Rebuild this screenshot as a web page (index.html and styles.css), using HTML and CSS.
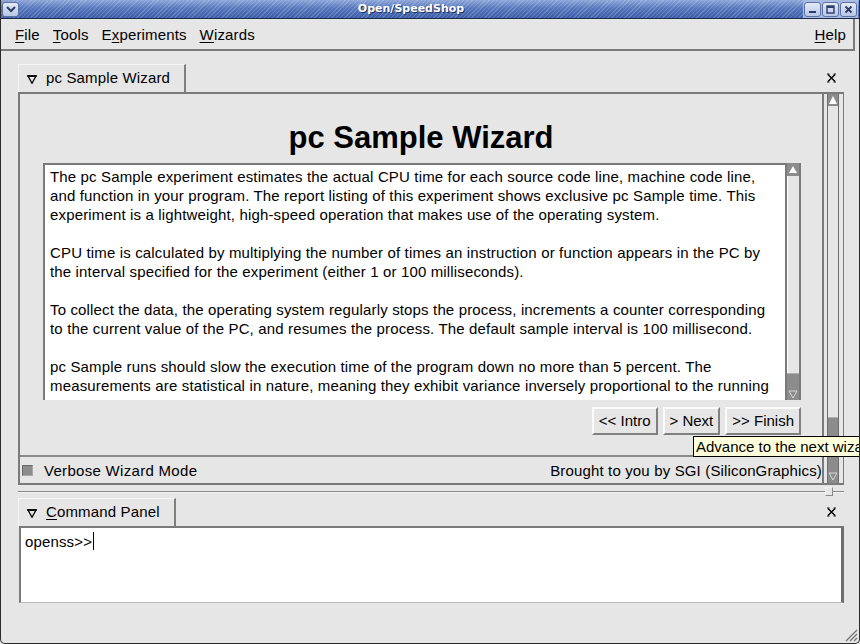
FILE: index.html
```html
<!DOCTYPE html>
<html>
<head>
<meta charset="utf-8">
<title>Open/SpeedShop</title>
<link rel="stylesheet" href="styles.css">
</head>
<body>
<div class="window">
  <div class="titlebar">
    <div class="wbtn wbtn-menu"><svg width="10" height="7" viewBox="0 0 10 7"><polyline points="1,1 5,5 9,1" fill="none" stroke="#2a3d66" stroke-width="2"/></svg></div>
    <div class="tb-title">Open/SpeedShop</div>
    <div class="wgroup">
      <div class="wbtn"><svg width="9" height="9" viewBox="0 0 9 9"><rect x="1" y="6" width="7" height="2" fill="#2a3d66"/></svg></div>
      <div class="wbtn"><svg width="9" height="9" viewBox="0 0 9 9"><rect x="1" y="1" width="7" height="7" fill="none" stroke="#2a3d66" stroke-width="1.4"/><rect x="1" y="1" width="7" height="2" fill="#2a3d66"/></svg></div>
      <div class="wbtn"><svg width="9" height="9" viewBox="0 0 9 9"><path d="M1.5 1.5 L7.5 7.5 M7.5 1.5 L1.5 7.5" stroke="#2a3d66" stroke-width="1.8"/></svg></div>
    </div>
  </div>

  <div class="client">
    <div class="menubar">
      <span class="menu"><u>F</u>ile</span>
      <span class="menu"><u>T</u>ools</span>
      <span class="menu">E<u>x</u>periments</span>
      <span class="menu"><u>W</u>izards</span>
      <span class="menu-spacer"></span>
      <span class="menu"><u>H</u>elp</span>
    </div>

    <div class="dock">
      <div class="tabrow">
        <div class="tab tab-wiz">
          <svg class="tri" width="10" height="9" viewBox="0 0 10 9"><polygon points="1,1 9,1 5,8.3" fill="none" stroke="#000" stroke-width="1.3"/><rect x="0.3" y="0.3" width="9.4" height="1.6" fill="#000"/></svg>
          <span>pc Sample Wizard</span>
        </div>
        <div class="tab-fill"></div>
        <div class="close"><svg width="11" height="10" viewBox="0 0 11 10"><path d="M2 1.5 L9 8.5 M9 1.5 L2 8.5" stroke="#000" stroke-width="1.4"/><path d="M1 1 H3.5 M7.5 1 H10 M1 9 H3.5 M7.5 9 H10" stroke="#000" stroke-width="0.9"/></svg></div>
      </div>
      <div class="frame">
        <div class="viewport">
          <div class="wiz-main">
            <h1 class="wiz-title">pc Sample Wizard</h1>
            <div class="textbox">
              <div class="tb-text">The pc Sample experiment estimates the actual CPU time for each source code line, machine code line,<br>and function in your program. The report listing of this experiment shows exclusive pc Sample time. This<br>experiment is a lightweight, high-speed operation that makes use of the operating system.<br><br>CPU time is calculated by multiplying the number of times an instruction or function appears in the PC by<br>the interval specified for the experiment (either 1 or 100 milliseconds).<br><br>To collect the data, the operating system regularly stops the process, increments a counter corresponding<br>to the current value of the PC, and resumes the process. The default sample interval is 100 millisecond.<br><br>pc Sample runs should slow the execution time of the program down no more than 5 percent. The<br>measurements are statistical in nature, meaning they exhibit variance inversely proportional to the running</div>
              <div class="sb">
                <div class="sb-up"><svg width="10" height="9" viewBox="0 0 10 9"><polygon points="5,1 9,8 1,8" fill="#fff"/></svg></div>
                <div class="sb-trough"></div>
                <div class="sb-thumb"></div>
                <div class="sb-down"><svg width="10" height="9" viewBox="0 0 10 9"><polygon points="1,1 9,1 5,8" fill="none" stroke="#d6d6d6" stroke-width="1"/></svg></div>
              </div>
            </div>
            <div class="buttons">
              <div class="btn">&lt;&lt; Intro</div>
              <div class="btn">&gt; Next</div>
              <div class="btn">&gt;&gt; Finish</div>
            </div>
          </div>
          <div class="wiz-foot">
            <span class="check"></span>
            <span class="check-label">Verbose Wizard Mode</span>
            <span class="foot-spacer"></span>
            <span class="credit">Brought to you by SGI (SiliconGraphics)</span>
          </div>
        </div>
        <div class="vscroll">
          <div class="vs-bar">
            <div class="vs-up"><svg width="10" height="10" viewBox="0 0 10 10"><polygon points="5,1 9,9 1,9" fill="#fff"/></svg></div>
            <div class="vs-trough"></div>
            <div class="vs-thumb"></div>
            <div class="vs-down"><svg width="10" height="10" viewBox="0 0 10 10"><polygon points="1,2 9,2 5,9" fill="none" stroke="#d6d6d6" stroke-width="1"/></svg></div>
          </div>
        </div>
      </div>
    </div>

    <div class="splitter">
      <div class="sp-line"></div>
      <div class="sp-handle"></div>
      <div class="sp-line sp-short"></div>
    </div>

    <div class="dock">
      <div class="tabrow">
        <div class="tab tab-cmd">
          <svg class="tri" width="10" height="9" viewBox="0 0 10 9"><polygon points="1,1 9,1 5,8.3" fill="none" stroke="#000" stroke-width="1.3"/><rect x="0.3" y="0.3" width="9.4" height="1.6" fill="#000"/></svg>
          <span><u>C</u>ommand Panel</span>
        </div>
        <div class="tab-fill"></div>
        <div class="close"><svg width="11" height="10" viewBox="0 0 11 10"><path d="M2 1.5 L9 8.5 M9 1.5 L2 8.5" stroke="#000" stroke-width="1.4"/><path d="M1 1 H3.5 M7.5 1 H10 M1 9 H3.5 M7.5 9 H10" stroke="#000" stroke-width="0.9"/></svg></div>
      </div>
      <div class="cmdbox">openss&gt;&gt;<span class="caret"></span></div>
    </div>

    <div class="bottom">
      <svg width="14" height="14" viewBox="0 0 14 14"><path d="M13 2 L2 13 M13 6 L6 13 M13 10 L10 13" stroke="#707070" stroke-width="1.2"/></svg>
    </div>
  </div>

  <div class="tooltip">Advance to the next wizard page.</div>
</div>
</body>
</html>
```

FILE: styles.css
```css
* { box-sizing: border-box; }
html, body { margin: 0; padding: 0; }
body {
  width: 860px;
  height: 644px;
  overflow: hidden;
  background: #e6e6e6;
  font-family: "Liberation Sans", Arial, sans-serif;
  font-size: 15px;
  letter-spacing: 0.15px;
  color: #000;
}
u { text-decoration: underline; text-underline-offset: 2px; }

.window {
  position: relative;
  width: 860px;
  height: 644px;
  border: 1px solid #2a2a2a;
  border-top: 0;
  border-radius: 0 0 5px 5px;
  background: #e6e6e6;
  display: flex;
  flex-direction: column;
  overflow: hidden;
}

/* title bar */
.titlebar {
  height: 19px;
  flex: none;
  display: flex;
  align-items: center;
  padding: 0 1px;
  border-bottom: 1px solid #1c2b4c;
  background:
    repeating-linear-gradient(135deg, rgba(255,255,255,0.16) 0 1px, rgba(255,255,255,0) 1px 3px),
    linear-gradient(#8ea6d8 0%, #5677bd 45%, #3d5ea8 100%);
}
.tb-title {
  flex: 1;
  text-align: center;
  color: #fff;
  font-family: "DejaVu Sans", sans-serif;
  font-weight: bold;
  font-size: 11px;
  letter-spacing: 0;
  line-height: 18px;
  text-shadow: 1px 1px 0 #22355f;
}
.wbtn {
  width: 17px;
  height: 15px;
  border: 1px solid #5c73a6;
  border-radius: 3px;
  background: linear-gradient(#e4eaf6, #b7c6e6);
  display: flex;
  align-items: center;
  justify-content: center;
}
.wgroup {
  display: flex;
  gap: 1px;
  padding: 1px 1px;
  height: 18px;
  align-items: center;
  background: #a9bbe2;
}

/* client */
.client {
  flex: 1;
  display: flex;
  flex-direction: column;
}
.menubar {
  height: 32px;
  flex: none;
  margin-right: 4px;
  margin-bottom: 13px;
  border-bottom: 2px solid #7a7a7a;
  border-right: 2px solid #7a7a7a;
  display: flex;
  align-items: center;
  gap: 13px;
  padding: 1px 7px 0 14px;
  line-height: 30px;
}
.menu-spacer { flex: 1; }

.dock {
  margin: 0 15px 0 17px;
  flex: none;
}
.tabrow {
  height: 28px;
  display: flex;
}
.tab {
  display: flex;
  align-items: center;
  border-top: 1px solid #f6f6f6;
  border-left: 1px solid #f6f6f6;
  border-right: 2px solid #7f7f7f;
  padding: 0 0 3px 8px;
  gap: 9px;
}
.tab .tri { margin-top: 5px; }
.tab-wiz { width: 168px; }
.tab-cmd { width: 158px; }
.tab-fill { flex: 1; }
.close {
  width: 26px;
  display: flex;
  align-items: center;
  justify-content: center;
  padding-bottom: 1px;
}

.frame {
  height: 393px;
  display: flex;
  border-left: 2px solid #7a7a7a;
  border-top: 2px solid #7a7a7a;
  border-bottom: 2px solid #7a7a7a;
}
.viewport {
  width: 804px;
  display: flex;
  flex-direction: column;
  border-right: 2px solid #7a7a7a;
}
.wiz-main {
  height: 363px;
  border-bottom: 2px solid #8a8a8a;
  display: flex;
  flex-direction: column;
}
.wiz-title {
  margin: 26px 0 0;
  font-size: 31px;
  letter-spacing: 0;
  line-height: 36px;
  font-weight: bold;
  text-align: center;
}
.textbox {
  margin: 7px 21px 0 23px;
  height: 237px;
  display: flex;
  background: #fff;
}
.tb-text {
  flex: 1;
  border-top: 2px solid #7a7a7a;
  border-left: 2px solid #7a7a7a;
  padding: 2px 5px;
  line-height: 19px;
  white-space: nowrap;
  overflow: hidden;
}
.sb {
  width: 16px;
  display: flex;
  flex-direction: column;
  border-left: 2px solid #7a7a7a;
  border-right: 2px solid #7a7a7a;
  background: #e6e6e6;
}
.sb-up, .sb-down, .vs-up, .vs-down {
  display: flex;
  align-items: center;
  justify-content: center;
  background: #8c8c8c;
}
.sb-up { height: 13px; }
.sb-trough { flex: 1; border-left: 1px solid #fff; }
.sb-thumb { height: 16px; background: #8c8c8c; border-top: 1px solid #b0b0b0; }
.sb-down { height: 11px; }

.buttons {
  margin-top: 7px;
  padding-right: 21px;
  display: flex;
  justify-content: flex-end;
  gap: 5px;
}
.btn {
  height: 28px;
  padding: 0 5px;
  line-height: 24px;
  letter-spacing: 0;
  border-top: 2px solid #fbfbfb;
  border-left: 2px solid #fbfbfb;
  border-right: 2px solid #808080;
  border-bottom: 2px solid #808080;
  background: #e6e6e6;
}

.wiz-foot {
  flex: 1;
  display: flex;
  align-items: center;
  padding: 0 0 0 2px;
}
.check {
  width: 11px;
  height: 11px;
  background: #8c8c8c;
  border-top: 1px solid #6a6a6a;
  border-left: 1px solid #6a6a6a;
  border-right: 1px solid #a8a8a8;
  border-bottom: 1px solid #a8a8a8;
}
.check-label { margin-left: 11px; letter-spacing: 0.3px; }
.foot-spacer { flex: 1; }

.vscroll {
  width: 20px;
  padding-left: 3px;
  border-right: 1px solid #7a7a7a;
}
.vs-bar {
  width: 12px;
  height: 100%;
  display: flex;
  flex-direction: column;
  border-left: 1px solid #6e6e6e;
  border-right: 1px solid #6e6e6e;
}
.vs-up { height: 12px; }
.vs-trough { flex: 1; }
.vs-thumb { height: 51px; background: #8c8c8c; border-top: 1px solid #b0b0b0; }
.vs-down { height: 15px; }

.splitter {
  height: 13px;
  margin: 0 15px 0 17px;
  display: flex;
  align-items: center;
  flex: none;
}
.sp-line {
  flex: 1;
  height: 2px;
  border-top: 1px solid #8a8a8a;
  border-bottom: 1px solid #f4f4f4;
}
.sp-short { flex: none; width: 11px; }
.sp-handle {
  width: 8px;
  height: 9px;
  border: 1px solid #8a8a8a;
  border-top-color: #f4f4f4;
  border-left-color: #f4f4f4;
  background: #e6e6e6;
}

.cmdbox {
  margin-left: 1px;
  height: 77px;
  background: #fff;
  border-left: 2px solid #7a7a7a;
  border-top: 2px solid #7a7a7a;
  border-right: 3px solid #6e6e6e;
  border-bottom: 1px solid #bdbdbd;
  padding: 4px 4px 0;
  line-height: 19px;
  display: flex;
  align-items: flex-start;
}
.caret {
  display: inline-block;
  width: 1px;
  height: 18px;
  background: #000;
  margin-left: 1px;
}

.bottom {
  flex: 1;
  display: flex;
  justify-content: flex-end;
  align-items: flex-end;
  padding: 0 1px 1px 0;
}

.tooltip {
  position: absolute;
  left: 692px;
  top: 436px;
  height: 21px;
  padding: 0 2px;
  border: 1px solid #000;
  background: #ffffdc;
  line-height: 19px;
  letter-spacing: 0;
  white-space: nowrap;
}
```
